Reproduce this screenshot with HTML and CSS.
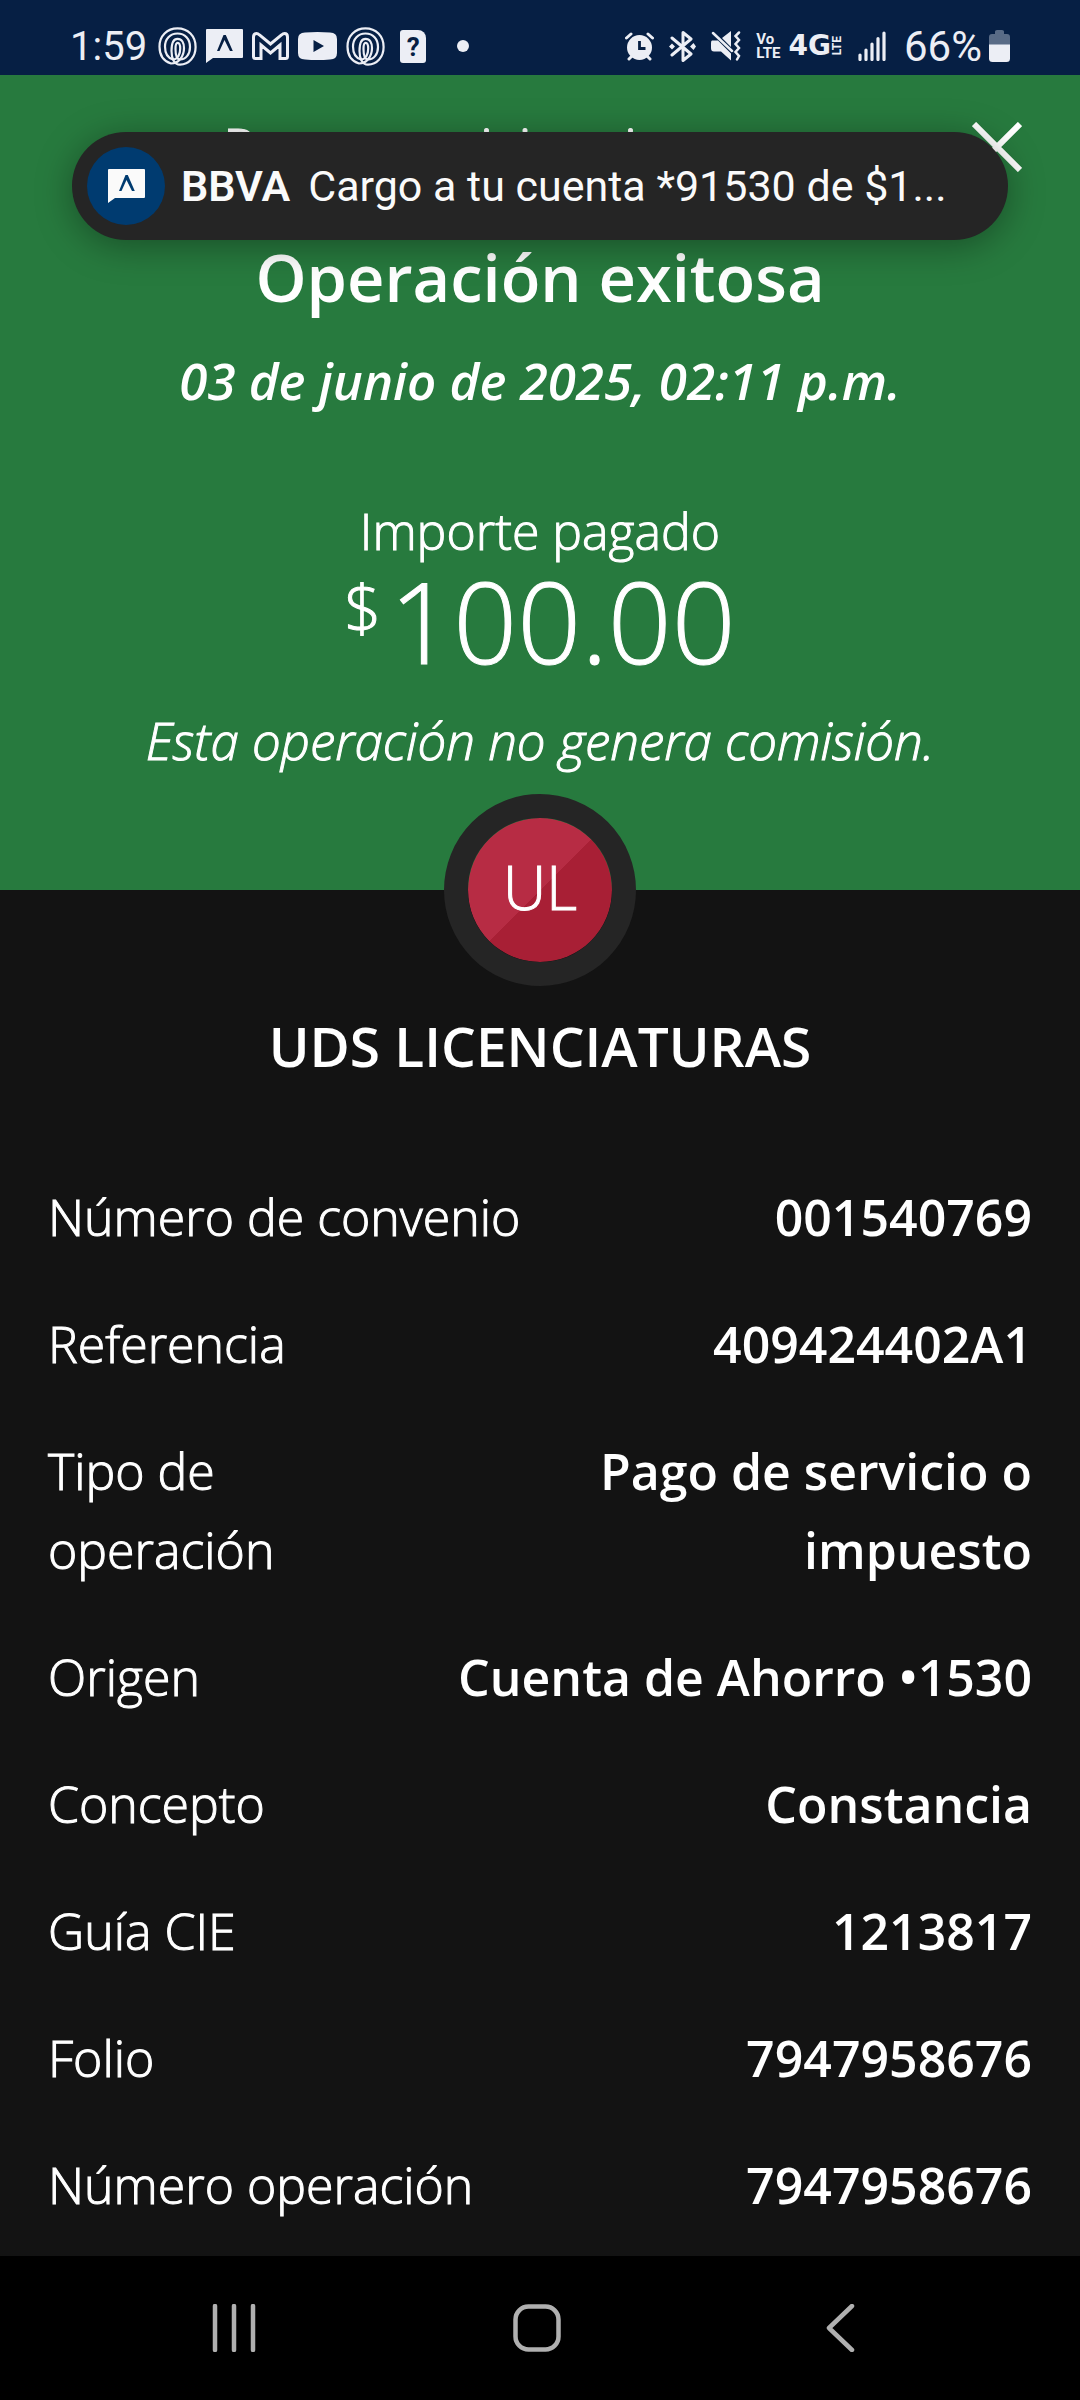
FILE: index.html
```
<!DOCTYPE html>
<html lang="es">
<head>
  <meta charset="UTF-8">
  <meta name="viewport" content="width=device-width, initial-scale=1">
  <title>Operación exitosa</title>
  <link rel="stylesheet" href="styles.css">
</head>
<body>
  <!-- shared icon shapes -->
  <svg class="defs" aria-hidden="true">
    <symbol id="swirl" viewBox="0 0 39 39">
      <g fill="none" stroke="currentColor" stroke-width="2.2">
        <path d="M13 36.500C5 34 1.500 27 1.500 19.500C1.500 9 9 1.400 19.500 1.400C30 1.400 37.600 9 37.600 20C37.600 30 31 37.600 22 37.600C16 37.600 13.500 31 13.500 24C13.500 16 15.500 11.800 19.500 11.800C24 11.800 26 16 26 21C26 29 21 36.500 13 36.500Z"/>
        <path d="M15 32.500C10 31 7 26 7 19.500C7 12 12 6.500 19.500 6.500C27 6.500 32 12 32 20C32 27 28 32.500 22 32.500C18.500 32.500 17.500 27 17.500 22C17.500 18 18 15.800 19.700 15.800C21.600 15.800 22.200 18 22.200 21.500C22.200 27 20 32.500 15 32.500Z"/>
      </g>
    </symbol>
    <symbol id="bubble" viewBox="0 0 37 34">
      <path fill="currentColor" fill-rule="evenodd" d="M1 0H36Q37 0 37 1V28Q37 29 36 29H7L0 34V1Q0 0 1 0ZM11 22H13.500L18.500 11L24 22H26.800L19.800 6H17.500Z"/>
    </symbol>
  </svg>

  <header class="status">
    <div class="status-group">
      <span class="clock">1:59</span>
      <svg class="swirl"><use href="#swirl"/></svg>
      <svg class="bubble"><use href="#bubble"/></svg>
      <svg width="37" height="28" viewBox="0 0 37 28"><path d="M9 26.500H3.500Q1.500 26.500 1.500 24.500V5Q1.500 1.500 4.500 1.500Q6 1.500 7.500 3L18.500 12L29.500 3Q31 1.500 32.500 1.500Q35.500 1.500 35.500 5V24.500Q35.500 26.500 33.500 26.500H28V13L18.500 21L9 13Z" fill="none" stroke="currentColor" stroke-width="3"/></svg>
      <svg width="39" height="28" viewBox="0 0 39 28"><path fill="currentColor" fill-rule="evenodd" d="M7 .5Q19.500 -.5 32 .5Q39 .5 39 7V21Q39 27.500 32 27.500Q19.500 28.500 7 27.500Q0 27.500 0 21V7Q0 .5 7 .5ZM15.500 8V20L26 14Z"/></svg>
      <svg class="swirl"><use href="#swirl"/></svg>
      <span class="doc-icon">?</span>
      <span class="more-dot"></span>
    </div>
    <div class="status-group status-right">
      <svg width="29" height="29" viewBox="0 0 29 29"><circle cx="14.500" cy="15.500" r="12.500" fill="currentColor"/><path d="M1.500 6L6 2M27.500 6L23 2M4 27L7 24M25 27L22 24" stroke="currentColor" stroke-width="3" stroke-linecap="round"/><path d="M14.500 9V16.500H20.500" fill="none" stroke="#061f44" stroke-width="2.800"/></svg>
      <svg width="27" height="31" viewBox="0 0 27 31"><path d="M3 7L22 23L14 29.500V1.500L22 8L3 24" fill="none" stroke="currentColor" stroke-width="3" stroke-linejoin="round" stroke-linecap="round"/><path d="M0 15.500L3 12.500L6 15.500L3 18.500ZM21 15.500L24.500 12L27 15.500L24.500 19Z" fill="currentColor"/></svg>
      <svg width="30" height="30" viewBox="0 0 30 30"><path fill="currentColor" d="M1 9.500H7L20 22.500V29.500L10 20.500H3Q0 20.500 0 17V12Q0 9.500 1 9.500ZM11 7L20 0V16Z"/><path d="M2 2L21 20M28 1.500L24.500 5L28 9L24.500 13L28 17L24.500 21L28 25L26 28.500" fill="none" stroke="currentColor" stroke-width="2.500" stroke-linecap="round"/></svg>
      <span class="volte">Vo<br>LTE</span>
      <span class="net">4G<span class="net-lte">LTE</span></span>
      <svg width="28" height="30" viewBox="0 0 28 30"><path d="M2 24V28.500M8 19V28.500M14 13V28.500M20 7.500V28.500M26 2V28.500" stroke="currentColor" stroke-width="3.200" stroke-linecap="round"/></svg>
      <span class="charge">66%</span>
      <svg width="21" height="32" viewBox="0 0 21 32"><path fill="#596b86" d="M6 1.500Q6 0 8 0H13Q15 0 15 1.500V4H18Q21 4 21 7V15H0V7Q0 4 3 4H6Z"/><path fill="currentColor" d="M0 14.500H21V28.500Q21 32 17.500 32H3.500Q0 32 0 28.500Z"/></svg>
    </div>
  </header>

  <div class="toast" role="status">
    <span class="toast-icon"><svg class="bubble"><use href="#bubble"/></svg></span>
    <strong>BBVA</strong>
    <span class="toast-text">Cargo a tu cuenta *91530 de $1...</span>
  </div>

  <section class="summary">
    <div class="topbar">
      <span class="topbar-title">Pagar servicio o impuesto</span>
      <button class="close" aria-label="Cerrar">
        <svg width="50" height="50" viewBox="0 0 50 50"><path d="M2 2L48 48M48 2L2 48" stroke="currentColor" stroke-width="6"/></svg>
      </button>
    </div>
    <h1>Operación exitosa</h1>
    <p class="date">03 de junio de 2025, 02:11 p.m.</p>
    <p class="amount-label">Importe pagado</p>
    <p class="amount"><span class="currency">$</span>100.00</p>
    <p class="fee">Esta operación no genera comisión.</p>
  </section>

  <main class="details">
    <div class="avatar">UL</div>
    <h2>UDS LICENCIATURAS</h2>
    <dl>
      <div class="row"><dt>Número de convenio</dt><dd>001540769</dd></div>
      <div class="row"><dt>Referencia</dt><dd>409424402A1</dd></div>
      <div class="row"><dt>Tipo de operación</dt><dd>Pago de servicio o impuesto</dd></div>
      <div class="row"><dt>Origen</dt><dd>Cuenta de Ahorro •1530</dd></div>
      <div class="row"><dt>Concepto</dt><dd>Constancia</dd></div>
      <div class="row"><dt>Guía CIE</dt><dd>1213817</dd></div>
      <div class="row"><dt>Folio</dt><dd>7947958676</dd></div>
      <div class="row"><dt>Número operación</dt><dd>7947958676</dd></div>
    </dl>
  </main>

  <nav class="navbar">
    <button aria-label="Recientes"><svg width="48" height="48" viewBox="0 0 48 48"><path d="M5 2V46M24 2V46M43 2V46" stroke="currentColor" stroke-width="4.500" stroke-linecap="round"/></svg></button>
    <button aria-label="Inicio"><svg width="48" height="48" viewBox="0 0 48 48"><rect x="2.500" y="2.500" width="43" height="43" rx="13" fill="none" stroke="currentColor" stroke-width="4.500"/></svg></button>
    <button aria-label="Atrás"><svg width="48" height="48" viewBox="0 0 48 48"><path d="M36 2L13 24L36 46" fill="none" stroke="currentColor" stroke-width="4.500" stroke-linecap="round" stroke-linejoin="round"/></svg></button>
  </nav>
</body>
</html>
```
FILE: styles.css
```
* {
  box-sizing: border-box;
}
body {
  margin: 0;
  min-height: 100vh;
  display: flex;
  flex-direction: column;
  position: relative;
  background: #131313;
  color: #fff;
  font-family: "Open Sans", "Noto Sans", sans-serif;
  font-size: 50px;
  font-weight: 300;
}
h1, h2, p, dl, dd {
  margin: 0;
}
button {
  padding: 0;
  border: 0;
  background: none;
  color: inherit;
}
svg {
  display: block;
  flex: none;
}
.defs {
  position: absolute;
  width: 0;
  height: 0;
}

/* status bar */
.status {
  display: flex;
  justify-content: space-between;
  height: 75px;
  padding: 17px 70px 0 70px;
  background: #061f44;
  color: #eceef5;
  font-family: Roboto, sans-serif;
  font-size: 40px;
  font-weight: 400;
}
.status-group {
  display: flex;
  align-items: center;
  height: 58px;
  gap: 9px;
}
.status-right {
  gap: 15px;
}
.clock {
  margin-right: 2px;
}
.swirl {
  width: 39px;
  height: 39px;
}
.bubble {
  width: 37px;
  height: 34px;
}
.doc-icon {
  width: 26px;
  height: 33px;
  margin-left: 6px;
  border-radius: 3px 8px 3px 3px;
  background: #eceef5;
  color: #061f44;
  font-size: 26px;
  font-weight: 700;
  line-height: 34px;
  text-align: center;
}
.more-dot {
  width: 12px;
  height: 12px;
  margin-left: 22px;
  border-radius: 50%;
  background: #eceef5;
}
.volte {
  margin-right: -7px;
  font-size: 15px;
  font-weight: 700;
  line-height: 14px;
}
.net {
  display: flex;
  align-items: center;
  font-family: "DejaVu Sans", sans-serif;
  font-size: 28px;
  font-weight: 700;
  line-height: 28px;
}
.net-lte {
  writing-mode: vertical-rl;
  transform: rotate(180deg);
  font-family: Roboto, sans-serif;
  font-size: 12px;
  line-height: 12px;
}
.charge {
  margin: 0 -8px 0 3px;
  font-size: 42px;
}

/* notification over the page */
.toast {
  position: absolute;
  top: 132px;
  left: 72px;
  right: 72px;
  z-index: 2;
  display: flex;
  align-items: center;
  height: 108px;
  padding: 0 50px 0 15px;
  border-radius: 54px;
  background: #252525;
  box-shadow: 0 6px 36px rgba(0, 0, 0, 0.35);
  color: #fafafa;
  font-family: Roboto, sans-serif;
  font-size: 43px;
  font-weight: 400;
  white-space: nowrap;
}
.toast-icon {
  display: flex;
  align-items: center;
  justify-content: center;
  flex: none;
  width: 78px;
  height: 78px;
  margin-right: 16px;
  border-radius: 50%;
  background: #003b70;
}
.toast strong {
  margin-right: 18px;
  font-weight: 600;
}
.toast-text {
  overflow: hidden;
  text-overflow: ellipsis;
}

/* green header */
.summary {
  padding: 34px 48px 110px;
  background: #277a3e;
  text-align: center;
}
.topbar {
  display: flex;
  align-items: center;
  justify-content: center;
  position: relative;
  height: 76px;
}
.topbar-title {
  font-size: 55px;
}
.close {
  position: absolute;
  right: 10px;
}
h1 {
  margin-top: 43px;
  font-size: 65px;
  font-weight: 600;
  line-height: 98px;
}
.date {
  margin-top: 14px;
  font-size: 51px;
  font-style: italic;
  font-weight: 600;
  line-height: 80px;
}
.amount-label {
  margin-top: 71px;
  line-height: 80px;
}
.amount {
  display: flex;
  justify-content: center;
  font-size: 112px;
  line-height: 100px;
}
.currency {
  margin-right: 8px;
  font-size: 65px;
  line-height: 72px;
}
.fee {
  margin-top: 29px;
  font-size: 51px;
  font-style: italic;
  line-height: 80px;
}
/* the light cut is too thin on a dark screen */
.topbar-title, .amount-label, .amount, .fee, .avatar, dt {
  -webkit-text-stroke: 1px currentColor;
}

/* receipt rows */
.details {
  flex: 1;
  padding: 0 48px;
}
.avatar {
  display: flex;
  align-items: center;
  justify-content: center;
  width: 192px;
  height: 192px;
  margin: -96px auto 0;
  padding-bottom: 6px;
  border: 24px solid #252525;
  border-radius: 50%;
  background: linear-gradient(135deg, #b72c44 50%, #a81f35 50%) padding-box;
  font-size: 60px;
}
h2 {
  margin: 20px 0 92px;
  font-size: 55px;
  font-weight: 600;
  line-height: 80px;
  text-align: center;
}
.row {
  display: flex;
  justify-content: space-between;
  gap: 24px;
  margin-bottom: 48px;
  line-height: 79px;
}
.row:last-child {
  margin-bottom: 0;
}
dd {
  font-weight: 600;
  text-align: right;
}

/* system navigation */
.navbar {
  display: flex;
  align-items: center;
  justify-content: space-around;
  height: 144px;
  padding: 0 88px 0 82px;
  background: #000;
  color: #b0b0b0;
}
```
